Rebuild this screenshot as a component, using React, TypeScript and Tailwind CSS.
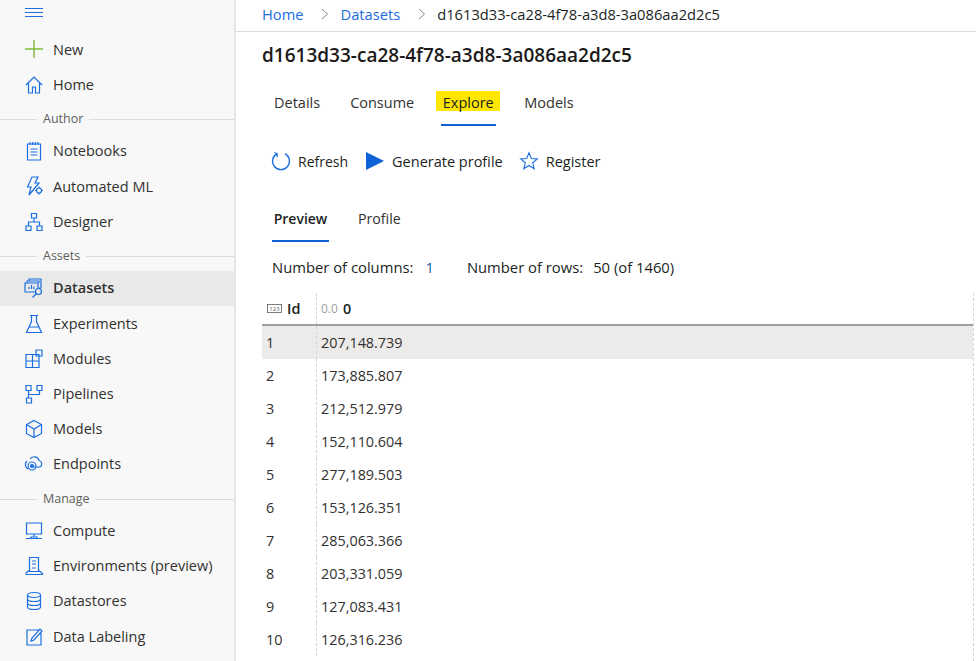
import { ReactNode } from "react";

const Ico = ({ children }: { children: ReactNode }) => (
    <svg width="20" height="20" viewBox="0 0 20 20" fill="none" stroke="#1b6ee0" strokeWidth="1.2" className="shrink-0">
        {children}
    </svg>
);

const icons: Record<string, ReactNode> = {
    plus: <path d="M10 1v18M1 10h18" stroke="#7fba3c" strokeWidth="1.4" />,
    home: <path d="M2 10l8-8 8 8M4.500 8v10h4v-6h3v6h4V8" />,
    notebook: <path d="M3.500 3h13v16h-13zM6 1v3M8.700 1v3M11.300 1v3M14 1v3M6.500 8h7M6.500 11h7M6.500 14h7" />,
    auto: (
        <>
            <path d="M8 1h6l-3 6h4L5 19l2-8H3.500z" />
            <circle cx="15" cy="14.500" r="2.500" />
            <path d="M15 10.500v1.500M15 17v1.500M11 14.500h1.500M17.500 14.500H19" />
        </>
    ),
    designer: <path d="M7.500 1.500h5v4.500h-5zM2 14h5v4.500H2zM13 14h5v4.500h-5zM10 6v4M4.500 14v-4h11v4" />,
    datasets: (
        <>
            <path d="M5 3V1h12v9h-2M3 5V3h12v2M1 5h13v9H1z" />
            <path d="M5 11V9M7.500 11V7M10 11V8.500" />
            <circle cx="14.500" cy="13.500" r="3" fill="#e9e9e9" />
            <path d="M12.500 15.500L8.500 19.500" />
        </>
    ),
    flask: <path d="M6 1.500h8M7.500 1.500v6L2.500 18.500h15l-5-11v-6M5 13h10" />,
    modules: <path d="M2 5.500h13v13H2zM8.500 5.500v13M2 12h13M12 1h6v6h-6z" />,
    pipelines: <path d="M2 1.500h5v5H2zM13 1.500h5v5h-5zM2.500 14h5v5h-5zM4.500 6.500V14M4.500 10.500h11v-4" />,
    cube: <path d="M10 1.500l7.500 4v9l-7.500 4-7.500-4v-9zM2.500 5.500L10 10l7.500-4.500M10 10v8.500" />,
    endpoints: (
        <>
            <path d="M6 5a5 5 0 019 1.500 3.500 3.500 0 011 6.500h-6M4 15a5 5 0 01-1-8" />
            <circle cx="8" cy="12" r="4" />
            <circle cx="8" cy="12" r="1.500" fill="#1b6ee0" />
        </>
    ),
    compute: <path d="M2.500 2h15v11h-15zM10 13v3M2 17.500h16M7 16h6v1.500H7z" />,
    env: <path d="M5.500 1.500h9v14h-9zM8 5h4M8 8h4M1.500 18.500h17v-1L15 14.500M5 14.500l-3.500 3M8 12h4" />,
    stores: (
        <>
            <ellipse cx="10" cy="4" rx="6.500" ry="2.500" />
            <path d="M3.500 4v12c0 1.400 3 2.500 6.500 2.500s6.500-1.100 6.500-2.500V4M3.500 8c0 1.400 3 2.500 6.500 2.500s6.500-1.100 6.500-2.500M3.500 12c0 1.400 3 2.500 6.500 2.500s6.500-1.100 6.500-2.500" />
        </>
    ),
    label: <path d="M15 3H3v15h14V6M8 11l-1 3 3-1 8-9-2-2z" />,
};

const NavItem = ({ icon, label, active }: { icon: string; label: string; active?: boolean }) => (
    <div className={`h-[35.2px] flex items-center gap-[9px] pl-[24px] text-[14.5px] text-[#323130] ${active ? "bg-[#e9e9e9] font-semibold" : ""}`}>
        <Ico>{icons[icon]}</Ico>
        <span>{label}</span>
    </div>
);

const NavSection = ({ label }: { label: string }) => (
    <div className="h-[31.5px] pt-[3px] flex items-center gap-[6px] text-[12.5px] text-[#605e5c]">
        <div className="w-[37px] h-px bg-[#dddddd]" />
        <span>{label}</span>
        <div className="flex-1 h-px bg-[#dddddd]" />
    </div>
);

const Sidebar = () => (
    <aside className="w-[236px] shrink-0 h-full bg-[#f8f8f8] border-r-2 border-[#e6e6e6] overflow-hidden">
        <div className="h-[31.800px] pl-[25px] pt-[8px]">
            <div className="w-[18px] flex flex-col gap-[3px]">
                <div className="h-px bg-[#1b6ee0]" />
                <div className="h-px bg-[#1b6ee0]" />
                <div className="h-px bg-[#1b6ee0]" />
            </div>
        </div>
        <NavItem icon="plus" label="New" />
        <NavItem icon="home" label="Home" />
        <NavSection label="Author" />
        <NavItem icon="notebook" label="Notebooks" />
        <NavItem icon="auto" label="Automated ML" />
        <NavItem icon="designer" label="Designer" />
        <NavSection label="Assets" />
        <NavItem icon="datasets" label="Datasets" active />
        <NavItem icon="flask" label="Experiments" />
        <NavItem icon="modules" label="Modules" />
        <NavItem icon="pipelines" label="Pipelines" />
        <NavItem icon="cube" label="Models" />
        <NavItem icon="endpoints" label="Endpoints" />
        <NavSection label="Manage" />
        <NavItem icon="compute" label="Compute" />
        <NavItem icon="env" label="Environments (preview)" />
        <NavItem icon="stores" label="Datastores" />
        <NavItem icon="label" label="Data Labeling" />
    </aside>
);

const Chevron = () => (
    <svg width="8" height="12" viewBox="0 0 8 12" fill="none" stroke="#8a8886" strokeWidth="1">
        <path d="M1 1l5.500 5L1 11" />
    </svg>
);

const rows = [
    "207,148.739",
    "173,885.807",
    "212,512.979",
    "152,110.604",
    "277,189.503",
    "153,126.351",
    "285,063.366",
    "203,331.059",
    "127,083.431",
    "126,316.236",
];

const App = () => {
    return (
        <div className="w-[976px] h-[661px] flex overflow-hidden bg-white text-[14px] font-['Open_Sans',sans-serif]">
            <Sidebar />
            <main className="flex-1 min-w-0 flex flex-col">
                <div className="h-[32px] shrink-0 border-b border-[#dcdcdc] flex items-center pl-[26px] pb-[3px] text-[14.7px] text-[#201f1e]">
                    <span className="text-[#1b6ee0]">Home</span>
                    <span className="ml-[17px] mr-[12px]"><Chevron /></span>
                    <span className="text-[#1b6ee0]">Datasets</span>
                    <span className="ml-[18px] mr-[11px]"><Chevron /></span>
                    <span>d1613d33-ca28-4f78-a3d8-3a086aa2d2c5</span>
                </div>
                <h1 className="mt-[10px] ml-[26px] h-[26px] leading-[26px] text-[19px] font-semibold text-[#1b1a19]">
                    d1613d33-ca28-4f78-a3d8-3a086aa2d2c5
                </h1>
                <nav className="mt-[23px] h-[37px] flex ml-[38px] text-[14.5px] text-[#323130]">
                    <span className="mt-[1px]">Details</span>
                    <span className="mt-[1px] ml-[30px]">Consume</span>
                    <div className="ml-[22px] w-[64px] flex flex-col items-center">
                        <span className="w-full h-[20px] leading-[20px] pt-[2px] bg-[#ffe600] text-center text-[#201f1e]">Explore</span>
                        <div className="mt-[13px] w-[55px] h-[2px] bg-[#0f62d6]" />
                    </div>
                    <span className="mt-[1px] ml-[24px]">Models</span>
                </nav>
                <div className="mt-[23px] h-[22px] flex items-center ml-[35px] text-[14.5px] text-[#201f1e]">
                    <svg width="20" height="20" viewBox="0 0 20 20" fill="none" stroke="#1b6ee0" strokeWidth="1.300" className="-mt-[2px]">
                        <path d="M6 2.600a8.500 8.500 0 108 0M3.500 1.500L6.300 3 6 6" />
                    </svg>
                    <span className="ml-[7px] -mt-[1px] text-[14px]">Refresh</span>
                    <svg width="20" height="20" viewBox="0 0 20 20" fill="#0f62d6" className="ml-[17px] -mt-[2px]">
                        <path d="M1 1l18 9-18 9z" />
                    </svg>
                    <span className="ml-[7px]">Generate profile</span>
                    <svg width="20" height="20" viewBox="0 0 20 20" fill="none" stroke="#1b6ee0" strokeWidth="1.100" className="ml-[16px] -mt-[2px]">
                        <path d="M10 1.800l2.300 5.700 6 .4-4.600 3.900 1.500 6-5.200-3.300-5.200 3.300 1.500-6L1.700 7.900l6-.4z" />
                    </svg>
                    <span className="ml-[7px]">Register</span>
                </div>
                <div className="mt-[36px] h-[38px] flex ml-[36px] text-[#323130]">
                    <div className="w-[57px] flex flex-col items-center">
                        <span className="font-semibold text-[#201f1e] h-[20px] leading-[20px]">Preview</span>
                        <div className="mt-[11px] w-full h-[2px] bg-[#0f62d6]" />
                    </div>
                    <span className="ml-[29px] h-[20px] leading-[20px] text-[14.2px]">Profile</span>
                </div>
                <div className="mt-[10px] h-[20px] flex items-center ml-[36px] text-[14.8px] text-[#201f1e]">
                    <span className="font-medium">Number of columns:</span>
                    <span className="ml-[12px] text-[#1a5c96]">1</span>
                    <span className="ml-[33px] font-medium">Number of rows:</span>
                    <span className="ml-[10px]">50 (of 1460)</span>
                </div>
                <div className="mt-[16px] ml-[26px] mr-[2px] flex-1 border-r border-dashed border-[#d5d5d5] text-[14.4px] text-[#323130]">
                    <div className="h-[33px] flex border-b-2 border-[#a19f9d]">
                        <div className="w-[55px] border-r border-dashed border-[#d5d5d5] flex items-center pl-[5px] font-semibold text-[#201f1e]">
                            <svg width="15" height="9" viewBox="0 0 15 9" fill="none" stroke="#605e5c" strokeWidth="0.800">
                                <rect x="0.500" y="0.500" width="14" height="8" />
                                <text x="7.500" y="6.700" textAnchor="middle" fontSize="6" fontWeight="400" fill="#605e5c" stroke="none">123</text>
                            </svg>
                            <span className="ml-[5px]">Id</span>
                        </div>
                        <div className="flex items-center pl-[4px] font-semibold text-[#201f1e]">
                            <span className="text-[12px] font-normal text-[#a19f9d]">0.0</span>
                            <span className="ml-[5px]">0</span>
                        </div>
                    </div>
                    {rows.map((value, index) => (
                        <div key={value} className={`h-[33px] flex ${index === 0 ? "bg-[#edebe9]" : ""}`}>
                            <div className="w-[55px] border-r border-dashed border-[#d5d5d5] flex items-center pl-[4px] pt-[1px]">{index + 1}</div>
                            <div className="flex items-center pl-[4px] pt-[1px]">{value}</div>
                        </div>
                    ))}
                </div>
            </main>
        </div>
    );
};

export default App;
